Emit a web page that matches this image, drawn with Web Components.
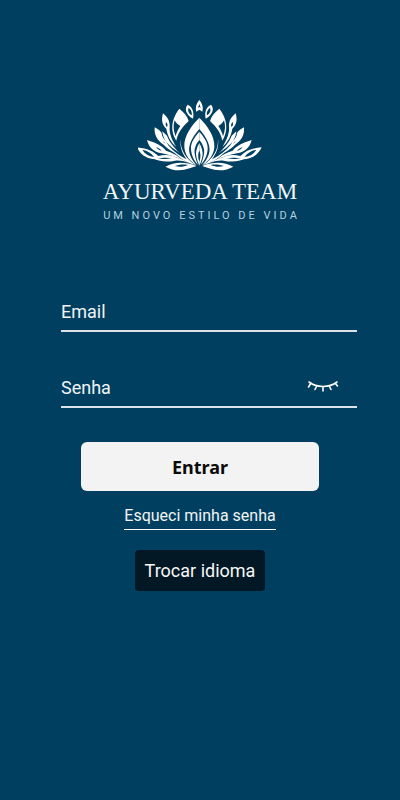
<!DOCTYPE html>
<html lang="pt-BR">
<head>
<meta charset="utf-8">
<meta name="viewport" content="width=device-width, initial-scale=1">
<title>Ayurveda Team</title>
<style>
body { margin: 0; background: #003f5f; color: #fff; font-family: Roboto, "Liberation Sans", sans-serif; }
</style>
</head>
<body>
<login-page></login-page>
<script>
const define = (name, html, setup) => customElements.define(name, class extends HTMLElement {
  constructor() {
    super();
    const template = document.createElement('template');
    template.innerHTML = html;
    this.attachShadow({ mode: 'open' }).append(template.content.cloneNode(true));
  }
  connectedCallback() { if (setup) setup(this, this.shadowRoot); }
});

define('lotus-mark', `
<style>
:host { display: block; width: 124px; height: 74px; }
svg { display: block; width: 100%; height: 100%; }
</style>
<svg viewBox="-184 16 372 222" aria-hidden="true">
  <defs>
    <g id="half" fill="#fff" fill-rule="evenodd">
      <path d="M35 36C46 48 40 66 19 78C15 60 20 42 35 36ZM32 45C24 52 21 60 23 68C33 61 35 54 32 45Z"/>
      <path d="M60 48C78 70 92 108 69 144C65 123 53 104 32 85C36 70 47 58 60 48ZM74 83C70 91 65 95 57 100C64 110 69 121 71 131C78 114 79 99 74 83Z"/>
      <path d="M109 62C115 83 111 98 99 108C95 130 87 147 69 163C82 142 91 121 89 103C88 86 95 73 109 62ZM100 88C95 93 94 98 97 103C101 99 102 94 100 88Z"/>
      <path d="M134 104C136 127 126 144 109 155C96 169 78 180 58 190C84 169 97 157 99 146C108 138 112 132 113 121C118 114 125 109 134 104ZM108 145L101 154L107 149Z"/>
      <path d="M111 116C109 137 100 151 81 165L58 182C79 161 91 146 97 129Z"/>
      <path d="M157 142C151 165 137 178 113 182C90 186 70 192 48 205C66 187 83 179 100 174C110 161 128 151 157 142ZM130 163C122 166 116 170 113 175C120 173 126 169 130 163Z"/>
      <path d="M187 164C177 186 157 200 130 200C111 193 84 193 55 203C76 187 99 184 123 190C139 174 158 166 187 164ZM171 171C155 174 143 182 136 193C152 191 163 184 171 171Z"/>
      <path d="M144 194C124 207 97 209 73 204C61 202 47 205 34 210C53 196 74 194 95 198C112 200 128 198 144 194Z"/>
      <path d="M102 222C79 235 54 236 29 227L8 220C45 206 75 208 102 222ZM74 220C62 216 48 214 34 217C48 223 60 224 74 220Z"/>
      <path d="M0 75C22 97 47 129 45 163C43 188 29 205 8 218C25 199 33 181 30 163C26 141 13 125 0 109Z"/>
      <path d="M0 117C14 134 26 148 25 169C24 190 15 204 4 217C12 198 16 183 14 169C11 157 6 149 0 142Z"/>
      <path d="M0 151C8 165 12 179 9 192C7 203 3 211 0 219V208C5 193 4 182 0 173Z"/>
      <path d="M56 139C58 172 39 200 11 217C34 213 57 198 76 178C61 186 50 194 38 200C52 181 59 162 56 139Z"/>
    </g>
  </defs>
  <use href="#half"/><use href="#half" transform="scale(-1 1)"/>
  <path fill="#fff" fill-rule="evenodd" d="M0 22C8 32 13 43 9 57L0 51L-9 57C-13 43-8 32 0 22ZM0 34L-4 46L0 43L4 46Z"/>
</svg>`);

define('brand-logo', `
<style>
:host { display: flex; flex-direction: column; align-items: center; }
h1 { margin: 6px 0 0; font: 23px/28px "Liberation Serif", serif; white-space: nowrap; color: #f1f7fa; }
p { margin: 2px 0 0; padding-left: 3px; font: 11px/16px Roboto, sans-serif; letter-spacing: 3px; white-space: nowrap; color: #b5d0df; }
</style>
<lotus-mark></lotus-mark>
<h1><slot name="title"></slot></h1>
<p><slot name="tagline"></slot></p>`);

define('line-field', `
<style>
:host { display: block; }
.row { display: flex; align-items: center; height: 40px; border-bottom: 2px solid #dbe3e8; }
input { flex: 1; min-width: 0; height: 38px; padding: 2px 0 0; border: 0; outline: 0; background: none; color: inherit; font: 18px/24px Roboto, sans-serif; }
input::placeholder { color: #f2f4f6; opacity: 1; }
</style>
<div class="row"><input><slot></slot></div>`, (host, root) => {
  const input = root.querySelector('input');
  input.type = host.getAttribute('type');
  input.placeholder = host.getAttribute('label');
  input.setAttribute('aria-label', host.getAttribute('label'));
});

define('eye-toggle', `
<style>
:host { display: block; margin-right: 18px; }
button { display: block; padding: 0; border: 0; background: none; color: #fff; cursor: pointer; }
svg { display: block; width: 32px; height: 16px; }
</style>
<button type="button" aria-label="Mostrar senha"><svg viewBox="0 0 32 16" fill="none" stroke="currentColor" stroke-width="1.6" stroke-linecap="round" aria-hidden="true"><path d="M2 4C10 10 22 10 30 4M4 5L1.500 9M9.500 8.500L8 11.500M16 9V13M22.500 8.500L24 11.500M28 5L30.500 8"/></svg></button>`);

define('login-page', `
<style>
:host { display: block; padding: 98px 43px 48px; }
form { display: flex; flex-direction: column; align-items: center; margin-top: 66px; }
line-field { align-self: stretch; margin-left: 18px; }
line-field + line-field { margin-top: 34px; }
button { border: 0; cursor: pointer; }
.enter { width: 76%; height: 49px; margin-top: 34px; border-radius: 6px; background: #f3f3f3; color: #0b0b0b; font: 700 18px/24px "Noto Sans", sans-serif; }
a { margin-top: 14px; padding-bottom: 2px; border-bottom: 1px solid #fff; color: #f2f4f6; font-size: 16px; line-height: 22px; text-decoration: none; white-space: nowrap; }
.language { height: 41px; margin-top: 20px; padding: 0 10px; border-radius: 4px; background: #021925; color: #f8f8f8; font: 18px/24px Roboto, sans-serif; white-space: nowrap; }
</style>
<brand-logo><span slot="title">AYURVEDA TEAM</span><span slot="tagline">UM NOVO ESTILO DE VIDA</span></brand-logo>
<form>
  <line-field type="email" label="Email"></line-field>
  <line-field type="password" label="Senha"><eye-toggle></eye-toggle></line-field>
  <button class="enter" type="button">Entrar</button>
  <a href="#recuperar">Esqueci minha senha</a>
  <button class="language" type="button">Trocar idioma</button>
</form>`);
</script>
</body>
</html>
